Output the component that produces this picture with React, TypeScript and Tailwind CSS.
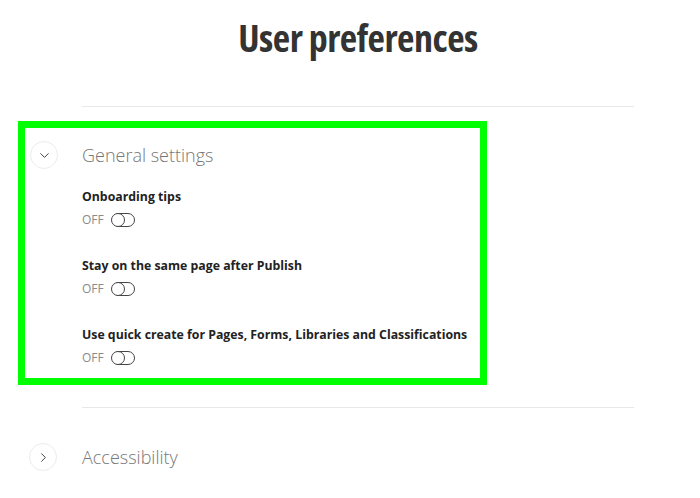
import { ChevronDown, ChevronRight } from 'lucide-react';

const SETTINGS = [
  'Onboarding tips',
  'Stay on the same page after Publish',
  'Use quick create for Pages, Forms, Libraries and Classifications',
];

function Toggle() {
  return (
    <div className="flex items-center gap-[8px]">
      <span className="text-[12px] text-[#8a8a8a] leading-none">OFF</span>
      <span className="relative flex h-[14px] w-[23px] items-center rounded-full border-[1.5px] border-[#444]">
        <span className="absolute left-[-1.5px] top-[-1.5px] h-[14px] w-[14px] rounded-full border-[1.5px] border-[#444] bg-white" />
      </span>
    </div>
  );
}

function Circle({ open }: { open: boolean }) {
  return (
    <div className="flex h-[28px] w-[28px] shrink-0 items-center justify-center rounded-full border border-[#ececec] text-[#444]">
      {open ? <ChevronDown size={15} strokeWidth={1.6} /> : <ChevronRight size={15} strokeWidth={1.6} />}
    </div>
  );
}

export default function App() {
  return (
    <div className="min-h-[498px] w-[700px] bg-white" style={{ fontFamily: '"Open Sans", sans-serif' }}>
      <h1 className="pt-[15px] text-center text-[38px] font-bold leading-[44px] text-[#333] font-stretch-condensed tracking-[-0.5px] pl-[16px]">
        User preferences
      </h1>

      <div className="ml-[82px] mt-[47px] h-px w-[552px] bg-[#e8e8e8]" />

      <div className="ml-[18px] mt-[14px] w-[469px] border-[7px] border-[#00ff00] pb-[13px] pl-[5px] pt-[13px]">
        <div className="flex items-center gap-[24px]">
          <Circle open />
          <span className="text-[18px] font-light text-[#777]">General settings</span>
        </div>
        <div className="ml-[52px] mt-[20px] flex flex-col gap-[31px]">
          {SETTINGS.map((s) => (
            <div key={s} className="flex flex-col gap-[8px]">
              <span className="whitespace-nowrap text-[12.3px] font-bold leading-[16px] text-[#222]">{s}</span>
              <Toggle />
            </div>
          ))}
        </div>
      </div>

      <div className="ml-[82px] mt-[22px] h-px w-[552px] bg-[#e8e8e8]" />

      <div className="ml-[29px] mt-[35px] flex items-center gap-[25px]">
        <Circle open={false} />
        <span className="text-[18px] font-light text-[#777]">Accessibility</span>
      </div>
    </div>
  );
}
